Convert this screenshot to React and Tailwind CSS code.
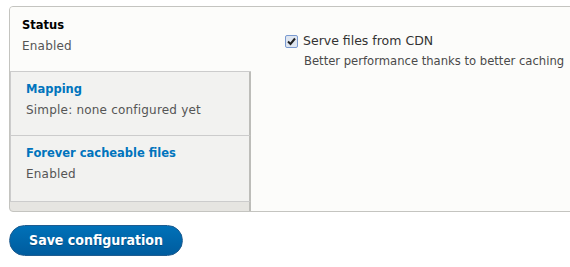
import React from "react"

const font = { fontFamily: '"DejaVu Sans", "Liberation Sans", sans-serif' }

const Tab = ({ title, summary, selected, className }) => (
	<div
		className={
			selected
				? "h-[65px] bg-[#fcfcfa] border-b border-[#ccc] pl-[12px] pt-[10px] " + className
				: "h-[64px] bg-[#f2f2f0] border-b border-[#ccc] border-r-2 border-r-[#bdbdb9] border-l border-l-[#ccc] pl-[15px] pt-[9px] " + className
		}>
		<div
			className={
				selected
					? "text-[11.5px] font-bold text-black leading-[16px]"
					: "text-[11.5px] font-bold text-[#0074bd] leading-[16px]"
			}>
			{title}
		</div>
		<div className="text-[12px] text-[#555] leading-[16px] mt-[5px] tracking-[0.2px]">{summary}</div>
	</div>
)

const App = () => {
	return (
		<div
			className="w-[570px] h-[267px] bg-white overflow-hidden pt-[6px] pl-[9px]"
			style={font}>
			{/* Vertical tabs */}
			<div className="flex w-[640px] h-[206px] border border-[#c4c4c0] rounded-l-[4px] overflow-hidden bg-[#e6e5e1]">
				<div className="w-[241px] flex flex-col">
					<Tab
						selected
						title="Status"
						summary="Enabled"
					/>
					<Tab
						title="Mapping"
						summary="Simple: none configured yet"
					/>
					<Tab
						title="Forever cacheable files"
						summary="Enabled"
						className="h-[66px]"
					/>
					<div className="flex-1 border-r-2 border-r-[#bdbdb9]"></div>
				</div>
				<div className="flex-1 bg-[#fcfcfa] pl-[34px] pt-[26px]">
					<div className="flex items-center gap-[5px]">
						<div className="w-[13px] h-[13px] border border-[#7a9ad0] rounded-[2px] bg-[#dfe6f0] flex items-center justify-center">
							<svg
								width="9"
								height="9"
								viewBox="0 0 9 9">
								<path
									d="M1 4.5 L3.5 7 L8 1.5"
									stroke="#222"
									strokeWidth="2"
									fill="none"
								/>
							</svg>
						</div>
						<span className="text-[12.5px] text-[#333] leading-[16px]">Serve files from CDN</span>
					</div>
					<div className="text-[11.6px] text-[#4a4a4a] leading-[14px] mt-[5px] ml-[19px] whitespace-nowrap">
						Better performance thanks to better caching
					</div>
				</div>
			</div>

			<button
				className="mt-[13px] h-[31px] w-[174px] rounded-full border border-[#1e5c90] bg-gradient-to-b from-[#0071b8] to-[#005c9e] text-white text-[14px] font-bold [text-shadow:0_1px_0_#004a80]"
				style={{ fontFamily: '"DejaVu Sans Condensed", "DejaVu Sans", sans-serif' }}>
				Save configuration
			</button>
		</div>
	)
}

export default App
